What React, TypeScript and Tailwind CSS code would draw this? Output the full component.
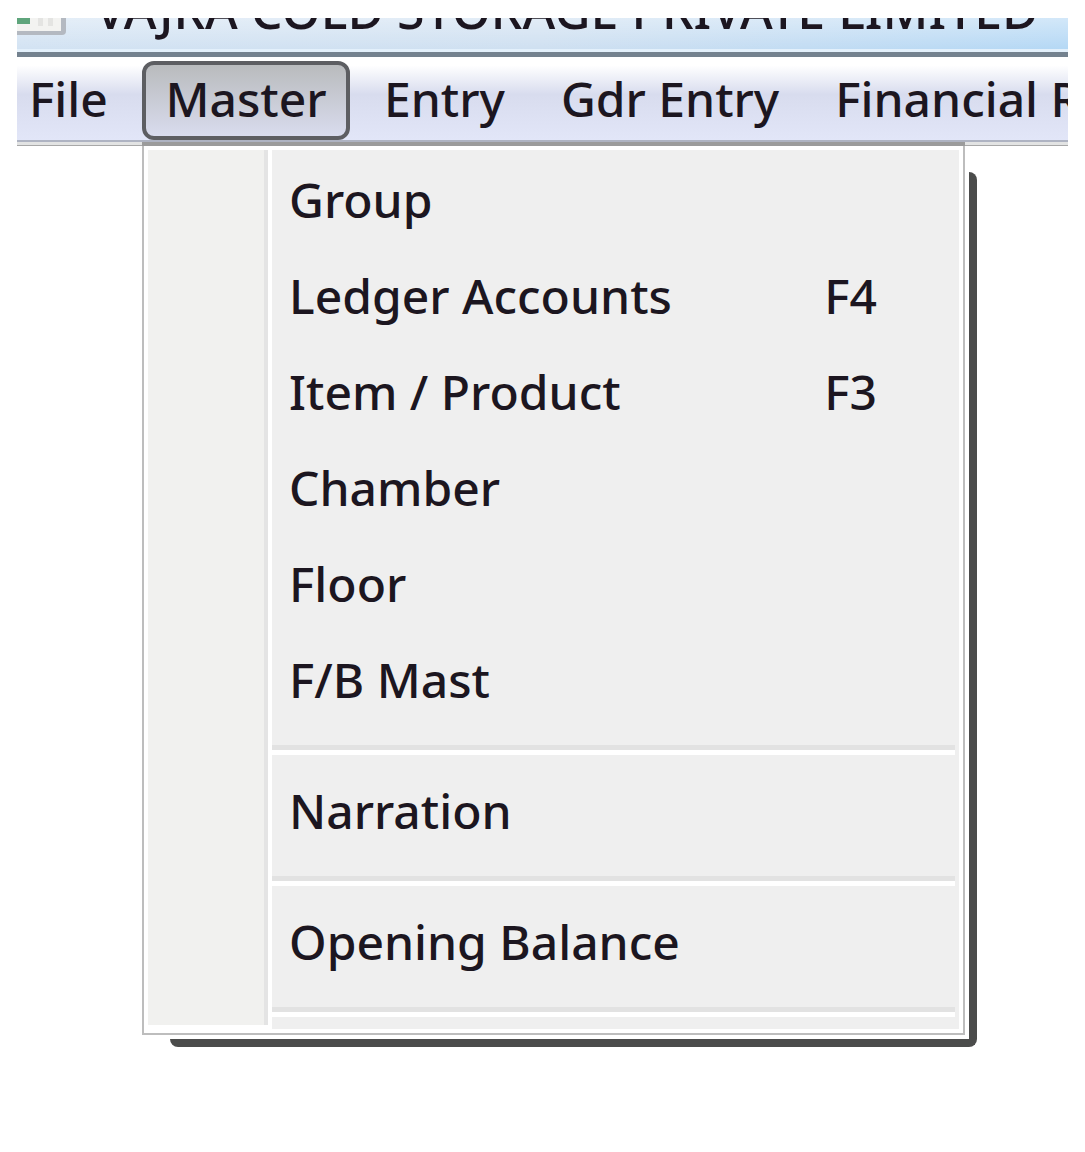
import React, { useState } from "react";
import clsx from "clsx";

type MenuEntry = { name: string; shortcut?: string };

const menuBar = ["File", "Master", "Entry", "Gdr Entry", "Financial R"];

// Each group is closed by a separator line
const menuGroups: MenuEntry[][] = [
  [
    { name: "Group" },
    { name: "Ledger Accounts", shortcut: "F4" },
    { name: "Item / Product", shortcut: "F3" },
    { name: "Chamber" },
    { name: "Floor" },
    { name: "F/B Mast" },
  ],
  [{ name: "Narration" }],
  [{ name: "Opening Balance" }],
];

function TitleBar() {
  return (
    <div className="flex h-[39px] items-end overflow-hidden border-b-[5px] border-[#74828f] bg-linear-to-r from-[#d3e3f3] via-[#cfe0f1] to-[#b5d8f5]">
      <div className="flex h-full w-full items-end border-b-[3px] border-[#e3f0fb] bg-linear-to-b from-white/40 to-transparent">
        <svg className="mr-7 h-8 w-[50px] shrink-0" viewBox="0 0 50 32" aria-hidden="true">
          <path d="M0 0H49V14Q49 18 45 18H0Z" fill="#b4b9c1" />
          <path d="M0 0H44V14H0Z" fill="#f3f3f1" />
          <path d="M21 0H26V9H21ZM31 0H36V9H31Z" fill="#e4e4e2" />
          <path d="M0 0H13V7H0Z" fill="#5fa57c" />
        </svg>
        <h1 className="mb-7 h-9 text-[50px] leading-none whitespace-nowrap">
          VAJRA COLD STORAGE PRIVATE LIMITED
        </h1>
      </div>
    </div>
  );
}

function Separator() {
  return <li role="separator" className="mt-[17px] mb-2 h-[10px] border-t-[5px] border-b-[5px] border-t-[#e2e2e2] border-b-white" />;
}

function DropdownMenu() {
  return (
    <div className="relative mr-[103px] ml-[125px]">
      {/* Hard shadow along the right and bottom edges */}
      <div className="absolute top-[26px] -right-3 -bottom-3 left-7 rounded-tr-lg rounded-br-lg rounded-bl-lg border-r-8 border-b-8 border-[#4b4c4b]" />
      <div className="relative flex border-2 border-t-0 border-[#bdbdbd] bg-white px-1 pb-1 shadow-[4px_4px_0_0_white]">
        <div className="mt-1 mb-1 w-[120px] shrink-0 border-r-4 border-[#e4e4e4] bg-[#f1f1ef]" />
        <ul className="mt-1 ml-1 flex-1 bg-[#efefef] pt-0.5 pr-1 pb-1">
          {menuGroups.map((group) => (
            <React.Fragment key={group[0].name}>
              {group.map((item) => (
                <li key={item.name}>
                  <button className="flex h-24 w-full items-center pr-[78px] pl-[17px] text-left">
                    <span className="flex-1">{item.name}</span>
                    {item.shortcut && <span>{item.shortcut}</span>}
                  </button>
                </li>
              ))}
              <Separator />
            </React.Fragment>
          ))}
        </ul>
      </div>
    </div>
  );
}

export default function App() {
  const [openMenu, setOpenMenu] = useState("Master");

  return (
    <main className="bg-white px-[17px] pt-[18px] pb-10 font-['Noto_Sans',sans-serif] text-5xl leading-none font-medium text-[#1c1620]">
      <TitleBar />
      <nav className="flex h-[85px] items-start gap-1 overflow-hidden border-b-2 border-[#aeb3c2] bg-linear-to-b from-white from-10% via-[#d8dcee] via-45% to-[#e2e6f8] pt-1">
        {menuBar.map((name) => (
          <button
            key={name}
            onClick={() => setOpenMenu(name)}
            className={clsx(
              "h-[79px] shrink-0 pb-1 whitespace-nowrap",
              name === "File" ? "w-[121px] pl-3 text-left" : name === "Master" ? "mr-1 w-52" : "px-[26px]",
              name === openMenu && "rounded-xl border-4 border-[#5d5e62] bg-linear-to-b from-[#b9bbbd] to-[#d9dcee]"
            )}
          >
            {name}
          </button>
        ))}
      </nav>
      {/* Lower edge of the bar, darker over the open menu */}
      <div className="flex h-1">
        <div className="w-[125px] border-b border-[#a8a8a8] bg-[#e2e3e3]" />
        <div className="flex-1 bg-[#9b9b9b]" />
        <div className="w-[103px] border-b border-[#a8a8a8] bg-[#e2e3e3]" />
      </div>
      <DropdownMenu />
    </main>
  );
}
